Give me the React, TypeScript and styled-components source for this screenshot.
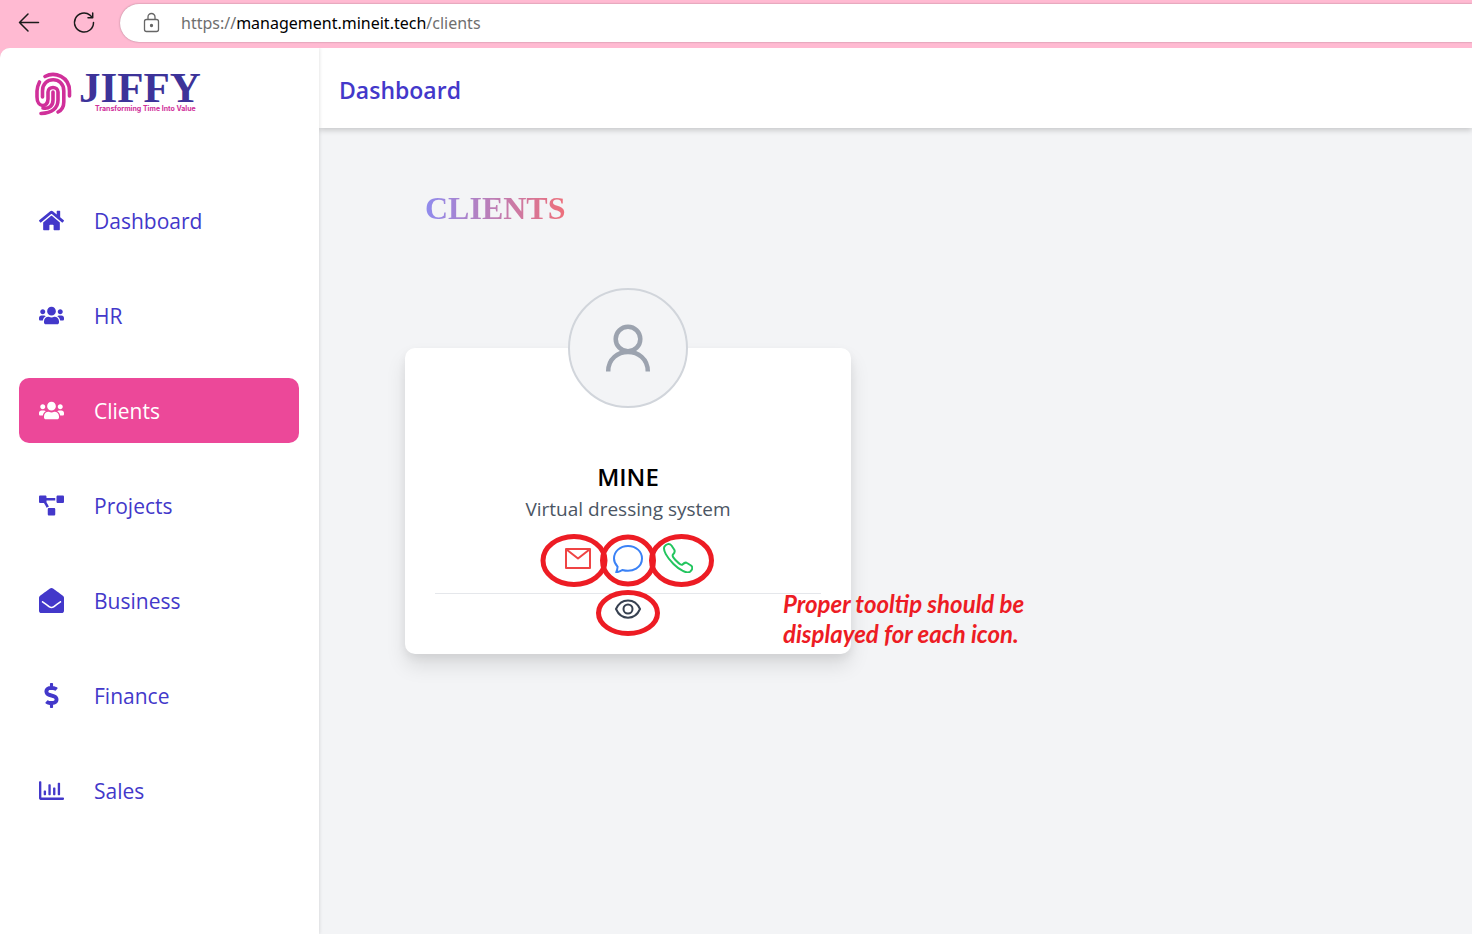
import React from 'react';
import styled, { createGlobalStyle, css } from 'styled-components';
import type { IconType } from 'react-icons';
import { FaHome, FaUsers, FaProjectDiagram, FaEnvelopeOpen, FaDollarSign, FaRegChartBar } from 'react-icons/fa';

const ui = `"Open Sans", "Noto Sans", sans-serif`;

const GlobalStyle = createGlobalStyle`
  *, *::before, *::after { box-sizing: border-box; }
  body { margin: 0; background: #ffbad2; font-family: ${ui}; }
  h1, h2, h3, p { margin: 0; }
`;

const Window = styled.div`
  min-height: 100vh;
  display: flex;
  flex-direction: column;
  overflow-x: hidden;
`;

const BrowserBar = styled.div`
  display: flex;
  align-items: center;
  height: 48px;
  padding: 0 0 3px 17px;
  gap: 31px;
`;

const BarButton = styled.button`
  display: flex;
  width: 24px;
  height: 24px;
  padding: 0;
  border: 0;
  background: none;
  color: #1b1b1b;
`;

const AddressBar = styled.div`
  flex: 1;
  display: flex;
  align-items: center;
  height: 38px;
  margin-left: -7px;
  padding-left: 20px;
  gap: 17px;
  background: #fff;
  border-radius: 19px 0 0 19px;
  box-shadow: 0 0 2px rgba(0, 0, 0, 0.35);
  color: #666;
`;

const Address = styled.a`
  font-family: "Noto Sans", sans-serif;
  font-size: 16px;
  line-height: 24px;
  color: #6f6f6f;
  text-decoration: none;
  strong { font-weight: 400; color: #000; }
`;

const Shell = styled.div`
  flex: 1;
  display: flex;
  background: #f3f4f6;
  border-top-left-radius: 10px;
  overflow: hidden;
`;

const Sidebar = styled.aside`
  position: relative;
  flex: none;
  width: 319px;
  padding: 24px 20px 0 19px;
  background: #fff;
  box-shadow: 0 0 4px rgba(0, 0, 0, 0.15);
`;

const Logo = styled.a`
  display: flex;
  gap: 7px;
  height: 44px;
  margin: 0 0 72px 16px;
  text-decoration: none;
`;

const LogoWords = styled.span`
  display: flex;
  flex-direction: column;
`;

const LogoName = styled.span`
  font: 700 43px/32px "Liberation Serif", serif;
  height: 33px;
  color: #3d3399;
`;

const LogoTag = styled.span`
  padding-left: 16px;
  font: 700 7px/8px Inter, sans-serif;
  color: #d0309a;
  white-space: nowrap;
`;

const Nav = styled.nav`
  display: flex;
  flex-direction: column;
  gap: 30px;
`;

const NavLink = styled.a<{ $active?: boolean }>`
  display: flex;
  align-items: center;
  gap: 30px;
  height: 65px;
  padding-left: 20px;
  border-radius: 10px;
  font-size: 21px;
  line-height: 30px;
  color: #4338ca;
  text-decoration: none;
  svg { width: 25px; height: 25px; }
  ${p => p.$active && css`
    background: #ec4899;
    color: #fff;
  `}
`;

const Main = styled.main`
  flex: 1;
  min-width: 0;
`;

const Header = styled.header`
  display: flex;
  align-items: center;
  height: 80px;
  padding: 4px 20px 0;
  background: #fff;
  box-shadow: 0 2px 6px rgba(0, 0, 0, 0.2);
`;

const HeaderTitle = styled.h1`
  font-size: 23px;
  line-height: 32px;
  font-weight: 600;
  color: #4338ca;
`;

const Content = styled.section`
  padding: 60px 86px;
`;

const PageTitle = styled.h2`
  width: max-content;
  margin-left: 20px;
  font: 700 32px/40px "Liberation Serif", serif;
  color: transparent;
  background: linear-gradient(to right, #8f8bee, #ee6f7a);
  background-clip: text;
  -webkit-background-clip: text;
`;

const Clients = styled.div`
  display: flex;
  flex-wrap: wrap;
  gap: 40px;
  padding-top: 120px;
`;

const Card = styled.article`
  position: relative;
  display: flex;
  flex-direction: column;
  align-items: center;
  width: 446px;
  max-width: 100%;
  padding: 0 30px 30px;
  background: #fff;
  border-radius: 10px;
  box-shadow: 0 12px 20px rgba(0, 0, 0, 0.1), 0 4px 8px rgba(0, 0, 0, 0.06);
`;

const Avatar = styled.div`
  display: flex;
  align-items: center;
  justify-content: center;
  width: 120px;
  height: 120px;
  margin-top: -60px;
  border: 2px solid #d1d5db;
  border-radius: 50%;
  background: #f3f4f6;
`;

const ClientName = styled.h3`
  margin-top: 52px;
  font-size: 24px;
  line-height: 34px;
  font-weight: 600;
  color: #000;
`;

const ClientNote = styled.p`
  font-size: 19px;
  line-height: 30px;
  color: #4b5563;
`;

const Actions = styled.div`
  display: flex;
  gap: 20px;
  padding: 19px 0 20px;
`;

const IconButton = styled.button<{ $color: string }>`
  display: flex;
  width: 30px;
  height: 30px;
  padding: 0;
  border: 0;
  background: none;
  color: ${p => p.$color};
`;

const CardFooter = styled.footer`
  display: flex;
  justify-content: center;
  width: 100%;
  border-top: 1px solid #e5e7eb;
`;

const Marks = styled.svg`
  position: absolute;
  top: 180px;
  left: 50%;
  margin-left: -93px;
  pointer-events: none;
`;

const Annotation = styled.p`
  position: absolute;
  top: 241px;
  left: 378px;
  font: italic 700 24px/30px Lato, sans-serif;
  color: #ed1c24;
  white-space: nowrap;
`;

const items: { label: string; icon: IconType; active?: boolean }[] = [
  { label: 'Dashboard', icon: FaHome },
  { label: 'HR', icon: FaUsers },
  { label: 'Clients', icon: FaUsers, active: true },
  { label: 'Projects', icon: FaProjectDiagram },
  { label: 'Business', icon: FaEnvelopeOpen },
  { label: 'Finance', icon: FaDollarSign },
  { label: 'Sales', icon: FaRegChartBar },
];

const Fingerprint = () => (
  <svg width="37" height="44" viewBox="0 0 37 44" fill="none" stroke="#d0309a" strokeWidth="3.6" strokeLinecap="round">
    <path d="M10 4.500C20-1 34.500 5 34.500 19V24" />
    <path d="M4.500 10C3 13 2 16 2 19V25C2 36 13 36 13 27V20C13 14 23 14 23 20V28C23 36 17 41 6 41.500" />
    <path d="M7.500 25V19C7.500 4 28.800 4 28.800 19V30C28.800 34 27 38 23 40" />
    <path d="M18 20V28C18 34 14 37 8 36" />
  </svg>
);

export default function App() {
  return (
    <>
      <GlobalStyle />
      <Window>
        <BrowserBar>
          <BarButton aria-label="Back">
            <svg width="24" height="24" viewBox="0 0 24 24" fill="none" stroke="currentColor" strokeWidth="1.500" strokeLinecap="round" strokeLinejoin="round">
              <path d="M21.500 11.500H2.500M11 3L2.500 11.500l8.500 8.500" />
            </svg>
          </BarButton>
          <BarButton aria-label="Refresh">
            <svg width="24" height="24" viewBox="0 0 24 24" fill="none" stroke="currentColor" strokeWidth="1.500" strokeLinecap="round" strokeLinejoin="round">
              <path d="M21.500 11.500a9.500 9.500 0 1 1-3.500-7.300L20.500 6.500M20.700 2V6.700H16" />
            </svg>
          </BarButton>
          <AddressBar>
            <svg width="24" height="24" viewBox="0 0 24 24" fill="none" stroke="currentColor" strokeWidth="1.300">
              <rect x="4.500" y="8.500" width="14" height="12" rx="2" />
              <path d="M8 8.500V6a3.500 3.500 0 0 1 7 0v2.500" />
              <circle cx="11.500" cy="14.500" r="1" fill="currentColor" />
            </svg>
            <Address href="#">https://<strong>management.mineit.tech</strong>/clients</Address>
          </AddressBar>
        </BrowserBar>
        <Shell>
          <Sidebar>
            <Logo href="#" aria-label="Jiffy">
              <Fingerprint />
              <LogoWords>
                <LogoName>JIFFY</LogoName>
                <LogoTag>Transforming Time Into Value</LogoTag>
              </LogoWords>
            </Logo>
            <Nav>
              {items.map(({ label, icon: Icon, active }) => (
                <NavLink key={label} href="#" $active={active}>
                  <Icon />
                  {label}
                </NavLink>
              ))}
            </Nav>
          </Sidebar>
          <Main>
            <Header>
              <HeaderTitle>Dashboard</HeaderTitle>
            </Header>
            <Content>
              <PageTitle>CLIENTS</PageTitle>
              <Clients>
                <Card>
                  <Avatar>
                    <svg width="50" height="50" viewBox="0 0 50 50" fill="none" stroke="#9ca3af" strokeWidth="4.500">
                      <circle cx="25" cy="16" r="12.300" />
                      <path d="M5.200 48.500C5.200 22.500 44.800 22.500 44.800 48.500" />
                    </svg>
                  </Avatar>
                  <ClientName>MINE</ClientName>
                  <ClientNote>Virtual dressing system</ClientNote>
                  <Actions>
                    <IconButton $color="#ef4444" aria-label="Email">
                      <svg width="30" height="30" viewBox="0 0 30 30" fill="none" stroke="currentColor" strokeWidth="2" strokeLinejoin="round">
                        <path d="M3 6H27V25H3ZM3.500 6.500L15 15.500L26.500 6.500" />
                      </svg>
                    </IconButton>
                    <IconButton $color="#3b82f6" aria-label="Message">
                      <svg width="30" height="30" viewBox="0 0 30 30" fill="none" stroke="currentColor" strokeWidth="2" strokeLinejoin="round">
                        <path d="M15 3C7 3 1 8.500 1 15.500C1 18.500 2.500 21.500 4.600 23.700C4.500 25.500 4 27.500 3.200 29.300C5.500 29 8 28 9.300 27C20 30 29 24 29 15.500C29 8.500 23 3 15 3Z" />
                      </svg>
                    </IconButton>
                    <IconButton $color="#22c55e" aria-label="Call">
                      <svg width="30" height="30" viewBox="0 0 30 30" fill="none" stroke="currentColor" strokeWidth="2" strokeLinejoin="round">
                        <path d="M1.500 3.500C3 1 6.500 0 8.500 2.500L11.300 6.800C12.500 9 11.500 10 10 11.500C8.500 13 12 16.500 14 18.500C16 20.500 18.500 22.500 19.500 21.500C21.500 19.500 22.500 19 24 20L28 22.500C30.500 24.500 29 27 27 28.700C24 31 16.500 27 10.500 21C4 14.500-.5 7 1.500 3.500Z" />
                      </svg>
                    </IconButton>
                  </Actions>
                  <CardFooter>
                    <IconButton $color="#374151" aria-label="View">
                      <svg width="30" height="30" viewBox="0 0 30 30" fill="none" stroke="currentColor" strokeWidth="2">
                        <path d="M3 15C8 3.500 22 3.500 27 15C22 26.500 8 26.500 3 15Z" />
                        <circle cx="15" cy="15" r="4.500" />
                      </svg>
                    </IconButton>
                  </CardFooter>
                  <Marks width="184" height="112" viewBox="0 0 184 112" fill="none" stroke="#ed1c24" strokeWidth="5">
                    <ellipse cx="39" cy="32.500" rx="31" ry="24" />
                    <ellipse cx="93" cy="32.500" rx="25.500" ry="23.500" />
                    <ellipse cx="146.500" cy="32.500" rx="30" ry="24" />
                    <ellipse cx="93" cy="85" rx="29.500" ry="20.500" />
                  </Marks>
                  <Annotation>
                    Proper tooltip should be
                    <br />
                    displayed for each icon.
                  </Annotation>
                </Card>
              </Clients>
            </Content>
          </Main>
        </Shell>
      </Window>
    </>
  );
}
